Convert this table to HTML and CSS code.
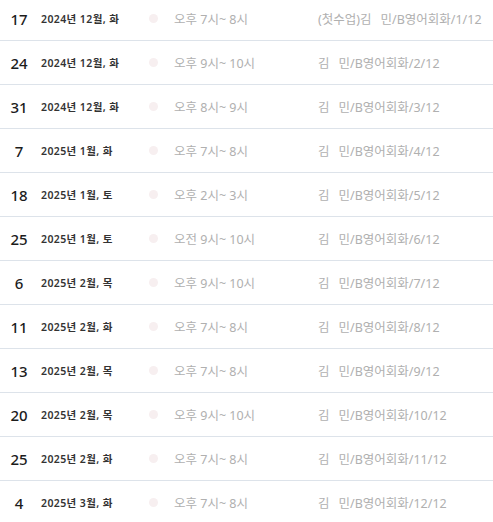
FILE: index.html
```html
<!DOCTYPE html>
<html lang="ko">
<head>
    <meta charset="UTF-8">
    <meta name="viewport" content="width=device-width, initial-scale=1.0">
    <title>수업 일정</title>
    <link rel="stylesheet" href="styles.css">
</head>
<body>
    <ul class="lesson-list">
        <li class="lesson">
            <span class="day">17</span>
            <span class="date">2024년 12월, 화</span>
            <span class="dot"></span>
            <span class="time">오후 7시~ 8시</span>
            <span class="title">(첫수업)김<span class="gap"></span>민/B영어회화/1/12</span>
        </li>
        <li class="lesson">
            <span class="day">24</span>
            <span class="date">2024년 12월, 화</span>
            <span class="dot"></span>
            <span class="time">오후 9시~ 10시</span>
            <span class="title">김<span class="gap"></span>민/B영어회화/2/12</span>
        </li>
        <li class="lesson">
            <span class="day">31</span>
            <span class="date">2024년 12월, 화</span>
            <span class="dot"></span>
            <span class="time">오후 8시~ 9시</span>
            <span class="title">김<span class="gap"></span>민/B영어회화/3/12</span>
        </li>
        <li class="lesson">
            <span class="day">7</span>
            <span class="date">2025년 1월, 화</span>
            <span class="dot"></span>
            <span class="time">오후 7시~ 8시</span>
            <span class="title">김<span class="gap"></span>민/B영어회화/4/12</span>
        </li>
        <li class="lesson">
            <span class="day">18</span>
            <span class="date">2025년 1월, 토</span>
            <span class="dot"></span>
            <span class="time">오후 2시~ 3시</span>
            <span class="title">김<span class="gap"></span>민/B영어회화/5/12</span>
        </li>
        <li class="lesson">
            <span class="day">25</span>
            <span class="date">2025년 1월, 토</span>
            <span class="dot"></span>
            <span class="time">오전 9시~ 10시</span>
            <span class="title">김<span class="gap"></span>민/B영어회화/6/12</span>
        </li>
        <li class="lesson">
            <span class="day">6</span>
            <span class="date">2025년 2월, 목</span>
            <span class="dot"></span>
            <span class="time">오후 9시~ 10시</span>
            <span class="title">김<span class="gap"></span>민/B영어회화/7/12</span>
        </li>
        <li class="lesson">
            <span class="day">11</span>
            <span class="date">2025년 2월, 화</span>
            <span class="dot"></span>
            <span class="time">오후 7시~ 8시</span>
            <span class="title">김<span class="gap"></span>민/B영어회화/8/12</span>
        </li>
        <li class="lesson">
            <span class="day">13</span>
            <span class="date">2025년 2월, 목</span>
            <span class="dot"></span>
            <span class="time">오후 7시~ 8시</span>
            <span class="title">김<span class="gap"></span>민/B영어회화/9/12</span>
        </li>
        <li class="lesson">
            <span class="day">20</span>
            <span class="date">2025년 2월, 목</span>
            <span class="dot"></span>
            <span class="time">오후 9시~ 10시</span>
            <span class="title">김<span class="gap"></span>민/B영어회화/10/12</span>
        </li>
        <li class="lesson">
            <span class="day">25</span>
            <span class="date">2025년 2월, 화</span>
            <span class="dot"></span>
            <span class="time">오후 7시~ 8시</span>
            <span class="title">김<span class="gap"></span>민/B영어회화/11/12</span>
        </li>
        <li class="lesson">
            <span class="day">4</span>
            <span class="date">2025년 3월, 화</span>
            <span class="dot"></span>
            <span class="time">오후 7시~ 8시</span>
            <span class="title">김<span class="gap"></span>민/B영어회화/12/12</span>
        </li>
    </ul>
</body>
</html>
```

FILE: styles.css
```css
body {
    margin: 0;
    padding: 0;
    background: #ffffff;
    font-family: 'Noto Sans', 'Noto Sans CJK KR', sans-serif;
    overflow: hidden;
}

.lesson-list {
    list-style: none;
    margin: -3px 0 0 0;
    padding: 0;
}

.lesson {
    display: flex;
    align-items: center;
    height: 43px;
    border-bottom: 1px solid #dde3ea;
}

.day {
    width: 22px;
    margin-left: 8px;
    text-align: center;
    font-size: 15px;
    font-weight: 500;
    color: #1c1c1c;
}

.date {
    width: 108px;
    margin-left: 11px;
    font-size: 10.5px;
    font-weight: 600;
    letter-spacing: 0.4px;
    color: #333333;
}

.dot {
    width: 9px;
    height: 9px;
    border-radius: 50%;
    background: #f7eff0;
}

.time {
    width: 144px;
    margin-left: 16px;
    font-size: 12.5px;
    color: #b0b0b0;
}

.title {
    font-size: 12.5px;
    color: #b0b0b0;
}

.gap {
    display: inline-block;
    width: 9px;
}
```
